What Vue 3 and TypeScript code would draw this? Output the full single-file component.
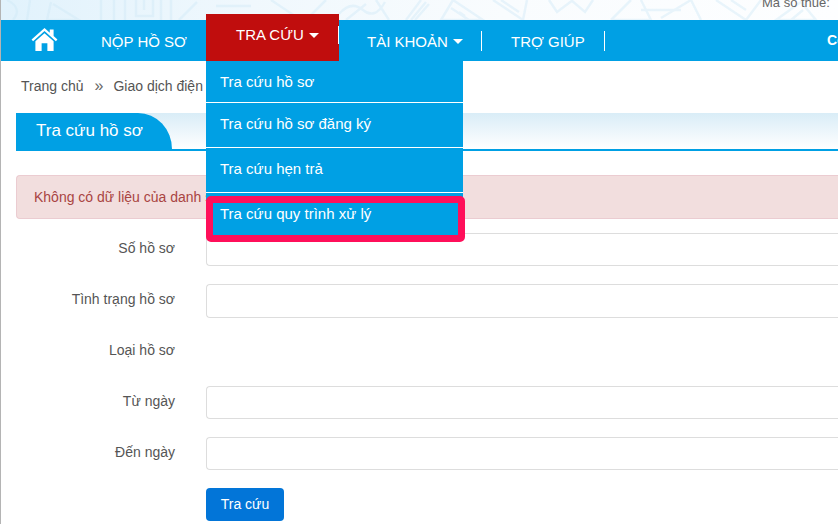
<script setup lang="ts">
const navItems = [
  { label: 'NỘP HỒ SƠ', caret: false, cls: 'n-nop' },
  { label: 'TRA CỨU', caret: true, cls: 'n-tra' },
  { label: 'TÀI KHOẢN', caret: true, cls: 'n-tk' },
  { label: 'TRỢ GIÚP', caret: false, cls: 'n-tg' },
]
const menu = ['Tra cứu hồ sơ', 'Tra cứu hồ sơ đăng ký', 'Tra cứu hẹn trả', 'Tra cứu quy trình xử lý']
const rows = [
  { label: 'Số hồ sơ', input: true, cls: 'r1' },
  { label: 'Tình trạng hồ sơ', input: true, cls: 'r2' },
  { label: 'Loại hồ sơ', input: false, cls: 'r3' },
  { label: 'Từ ngày', input: true, cls: 'r4' },
  { label: 'Đến ngày', input: true, cls: 'r5' },
]
</script>

<template>
  <div class="page">
    <header class="banner">
      <svg class="pattern" width="838" height="20" viewBox="0 0 838 20" aria-hidden="true">
        <defs>
          <filter id="soft"><feGaussianBlur stdDeviation="0.7" /></filter>
        </defs>
        <g fill="none" stroke="#cfe9f7" stroke-width="2.5" filter="url(#soft)">
          <path d="M6 0 Q22 8 12 20 M29 0 L26 20 M50 2 L46 20 H78 L52 4" />
          <path d="M100 0 V20 M113 0 V20 M124 0 V20 M135 0 V16 H152 V0 M143 0 V10 M160 0 V20 M170 0 V20 M178 20 L196 2" />
          <path d="M338 14 Q350 0 362 10 T384 2 M345 20 L365 4 M375 0 L388 20" />
          <path d="M405 20 L420 0 M410 20 L425 2 M414 20 L428 4 M440 20 L452 0 L482 20 Z M450 8 L468 20 M458 12 L464 16" />
          <path d="M492 0 L522 20 L526 0 M500 0 L518 12" />
          <path d="M548 0 L556 12 L572 0 M570 0 L584 12 L592 0" />
          <path d="M610 20 L630 0 M612 20 H650 L640 0 M660 18 L690 0 L700 20" />
          <path d="M715 0 L745 20 L760 0 M730 0 L745 10 M775 20 L800 2 L815 20 Z M790 20 L802 10" />
          <path d="M640 10 L680 10 M215 6 H250 M270 0 L300 20 M305 20 L325 0" />
        </g>
      </svg>
      <span class="tax">Mã số thuế:</span>
    </header>

    <nav class="nav">
      <svg class="home" width="27" height="23" viewBox="0 0 27 24" aria-label="Trang chủ">
        <path fill="#fff" d="M13.5 0 L19 4.9 V1.5 H23 V8.4 L27 12 L25.4 13.7 L13.5 3.2 L1.6 13.7 L0 12 Z" />
        <path fill="#fff" d="M13.5 5.4 L23 13.8 V24 H16.5 V16 H10.5 V24 H4 V13.8 Z" />
      </svg>
      <div v-for="item in navItems" :key="item.label" class="nav-item" :class="item.cls">
        <span>{{ item.label }}</span><i v-if="item.caret" class="caret"></i>
      </div>
      <span class="user">Công</span>
    </nav>

    <div class="crumbs">
      <span>Trang chủ</span><span class="sep">»</span><span>Giao dịch điện tử</span>
    </div>

    <div class="tabbar">
      <div class="tab">Tra cứu hồ sơ</div>
    </div>

    <div class="alert">Không có dữ liệu của danh sách hồ sơ</div>

    <form class="form" @submit.prevent>
      <div v-for="row in rows" :key="row.label" class="row" :class="row.cls">
        <label>{{ row.label }}</label>
        <div v-if="row.input" class="input"></div>
      </div>
      <button class="btn" type="button">Tra cứu</button>
    </form>

    <ul class="dropdown">
      <li v-for="m in menu" :key="m">{{ m }}</li>
    </ul>
    <div class="mark"></div>
  </div>
</template>

<style>
html, body { margin: 0; overflow: hidden; background: #fff; }
</style>

<style scoped>
.page {
  position: relative;
  width: 838px;
  height: 524px;
  overflow: hidden;
  font-family: "Liberation Sans", Arial, sans-serif;
  font-size: 14px;
  color: #555;
  background: #fff;
  box-sizing: border-box;
  border-left: 1px solid #b4b4b4;
}
.banner {
  position: relative;
  height: 20px;
  background: linear-gradient(90deg, #e1f2fc 0%, #f0f8fd 30%, #f9fcfe 60%, #fdfeff 100%);
}
.pattern { position: absolute; left: 0; top: 0; opacity: .42; }
.tax {
  position: absolute;
  left: 761px;
  top: -5px;
  line-height: 16px;
  font-size: 13px;
  color: #666;
}
.nav {
  display: flex;
  align-items: center;
  height: 41px;
  background: #00a0e4;
  color: #fff;
  font-size: 15px;
  position: relative;
}
.home { margin-left: 30px; flex: none; margin-top: -2px; }
.nav-item { display: flex; align-items: center; white-space: nowrap; height: 20px; box-sizing: border-box; padding-top: 1px; }
.n-nop { margin-left: 43px; width: 105px; }
.n-tra {
  position: relative;
  align-self: flex-end;
  height: 47px;
  width: 133px;
  margin-top: -6px;
  background: #c00d0d;
  padding: 0 0 6px 30px;
}
.n-tra::after {
  content: "";
  position: absolute;
  right: 0;
  top: 12px;
  width: 1px;
  height: 18px;
  background: #fff;
}
.n-tk {
  width: 143px;
  height: 20px;
  padding-left: 28px;
  border-right: 1px solid #fff;
}
.n-tg {
  width: 123px;
  height: 20px;
  padding-left: 29px;
  border-right: 1px solid #fff;
}
.caret {
  display: inline-block;
  margin-left: 5px;
  margin-top: 1px;
  border-top: 5px solid #fff;
  border-left: 5px solid transparent;
  border-right: 5px solid transparent;
}
.user {
  position: absolute;
  left: 826px;
  top: 12px;
  font-weight: bold;
  font-size: 14px;
}
.crumbs {
  display: flex;
  align-items: center;
  height: 20px;
  margin-top: 15px;
  padding-left: 20px;
  color: #555;
}
.sep { margin: 0 10px 0 11px; color: #666; font-size: 16px; }
.tabbar {
  margin: 17px 0 0 15px;
  height: 36px;
  border-bottom: 2px solid #00a0e4;
  background: linear-gradient(180deg, #d9edf7 0%, #ffffff 100%);
}
.tab {
  width: 156px;
  height: 36px;
  box-sizing: border-box;
  padding: 8px 0 0 20px;
  background: #00a0e4;
  border-top-right-radius: 34px 36px;
  color: #fff;
  font-size: 17px;
  line-height: 19px;
}
.alert {
  margin: 24px 0 0 15px;
  height: 44px;
  box-sizing: border-box;
  padding: 12px 17px;
  line-height: 18px;
  background: #f2dede;
  border: 1px solid #ebccd1;
  border-right: 0;
  border-radius: 4px 0 0 4px;
  color: #a94442;
}
.form { margin-top: 14px; }
.row { display: flex; align-items: center; margin-bottom: 18px; }
.row label { width: 174px; text-align: right; flex: none; line-height: 20px; margin-top: -4px; }
.input {
  margin-left: 31px;
  flex: 1;
  height: 33px;
  box-sizing: border-box;
  background: #fff;
  border: 1px solid #ddd;
  border-right: 0;
  border-radius: 4px 0 0 4px;
}
.r2 .input { height: 34px; }
.r3 { height: 32px; }
.btn {
  display: block;
  margin-left: 205px;
  width: 78px;
  height: 33px;
  padding: 0 0 2px;
  border: 0;
  border-radius: 4px;
  background: #0275d8;
  color: #fff;
  font: 14px "Liberation Sans", Arial, sans-serif;
}
.dropdown {
  position: absolute;
  left: 205px;
  top: 61px;
  width: 257px;
  margin: 0;
  padding: 0;
  list-style: none;
  background: #00a0e4;
  color: #fff;
  font-size: 15px;
}
.dropdown li {
  height: 44px;
  box-sizing: border-box;
  padding: 11px 0 0 14px;
  line-height: 20px;
  border-bottom: 1px solid #fff;
}
.dropdown li:first-child { height: 42px; padding-top: 11px; }
.dropdown li:nth-child(2) { height: 45px; padding-top: 11px; }
.dropdown li:nth-child(3) { padding-top: 11px; height: 45px; }
.dropdown li:last-child { border-bottom: 0; padding-top: 11px; height: 43px; }
.mark {
  position: absolute;
  left: 205px;
  top: 196px;
  width: 259px;
  height: 46px;
  box-sizing: border-box;
  border: 7.5px solid #ff0f5a;
  border-radius: 5px;
  pointer-events: none;
}
</style>
